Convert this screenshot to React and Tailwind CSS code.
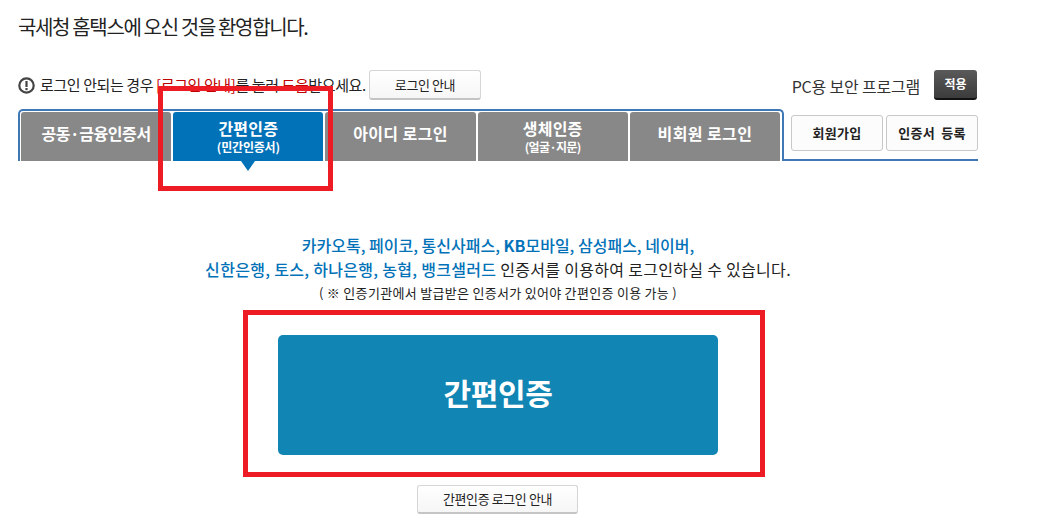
const font = { fontFamily: '"Noto Sans CJK KR", "Noto Sans", sans-serif' };

function Tab({ label, sub, active, labelClass = "tracking-[0.2px]", subClass = "tracking-[-0.2px]" }) {
  return (
    <div className={`relative flex-1 rounded-t-[3px] flex flex-col items-center justify-center text-white font-bold ${sub ? "pb-[2px]" : "pb-[8px]"} ${active ? "bg-[#0272b8]" : "bg-[#888888]"}`}>
      <span className={`text-[16px] leading-[22px] ${labelClass}`}>{label}</span>
      {sub && <span className={`text-[12px] leading-[16px] ${subClass}`}>{sub}</span>}
      {active && (
        <span className="absolute left-1/2 top-full -translate-x-1/2 w-0 h-0 border-l-[7px] border-r-[7px] border-t-[10px] border-l-transparent border-r-transparent border-t-[#0272b8]" />
      )}
    </div>
  );
}

function GrayButton({ children, className }) {
  return (
    <button className={`flex items-center justify-center bg-gradient-to-b from-white to-[#f6f6f6] border border-[#d5d5d5] border-b-2 border-b-[#c4c4c4] rounded-[3px] text-[13px] text-[#222] tracking-[-0.4px] ${className}`}>
      {children}
    </button>
  );
}

export default function App() {
  return (
    <div className="relative w-[1041px] h-[527px] overflow-hidden bg-white" style={font}>
      <div className="w-[960px] ml-[18px]">
        <h1 className="pt-[12px] h-[70px] text-[20px] leading-[30px] tracking-[-1.35px] text-[#222] font-normal">
          국세청 홈택스에 오신 것을 환영합니다.
        </h1>

        <div className="flex items-center justify-between h-[30px]">
          <div className="flex items-center">
            <svg width="17" height="17" viewBox="0 0 17 17" className="mr-[5px]">
              <circle cx="8.5" cy="8.5" r="7.2" fill="none" stroke="#444" strokeWidth="2.2" />
              <rect x="7.4" y="4" width="2.2" height="6" fill="#444" />
              <rect x="7.4" y="11" width="2.2" height="2.2" fill="#444" />
            </svg>
            <p className="text-[15px] leading-[20px] text-[#222] tracking-[-0.4px] whitespace-nowrap w-[329px]">
              로그인 안되는 경우 <span className="text-[#c00000]">[로그인 안내]</span>를 눌러 <span className="text-[#c00000]">도움</span>받으세요.
            </p>
            <GrayButton className="w-[112px] h-[30px]">로그인 안내</GrayButton>
          </div>
          <div className="flex items-center mr-[1px]">
            <span className="text-[16px] text-[#333] mr-[14px] relative top-[1px] tracking-[-0.2px]">PC용 보안 프로그램</span>
            <button className="w-[43px] h-[30px] rounded-[3px] bg-gradient-to-b from-[#5a5a5a] to-[#3c3c3c] border-b-2 border-b-[#111] text-white text-[12px] font-bold pb-[1px]">
              적용
            </button>
          </div>
        </div>

        <div className="flex h-[52px] mt-[9px]">
          <div className="w-[766px] border-2 border-b-0 border-[#3f78b5] rounded-t-[5px] pt-[1px] pl-[1px] pr-[2px] flex gap-[2px]">
            <Tab label="공동·금융인증서" labelClass="tracking-[-0.4px]" />
            <Tab label="간편인증" sub="(민간인증서)" active />
            <Tab label="아이디 로그인" labelClass="tracking-[0.4px]" />
            <Tab label="생체인증" sub="(얼굴·지문)" subClass="tracking-[-0.6px]" />
            <Tab label="비회원 로그인" labelClass="tracking-[0.4px]" />
          </div>
          <div className="flex-1 border-b-2 border-[#3f78b5] pl-[7px] pt-[6px] flex gap-[3px] items-start">
            <button className="flex-1 h-[36px] bg-[#fcfcfc] border border-[#c8c8c8] rounded-[3px] text-[13px] font-bold text-[#222] tracking-[0.3px]">회원가입</button>
            <button className="flex-1 h-[36px] bg-[#fcfcfc] border border-[#c8c8c8] rounded-[3px] text-[13px] font-bold text-[#222] tracking-[0.3px] [word-spacing:3px]">인증서 등록</button>
          </div>
        </div>

        <div className="flex flex-col items-center pt-[72px]">
          <p className="text-[16px] leading-[24px] text-[#0272b8] font-medium whitespace-nowrap">
            카카오톡, 페이코, 통신사패스, <b>KB</b>모바일, 삼성패스, 네이버,
          </p>
          <p className="text-[16px] leading-[24px] text-[#0272b8] tracking-[0.3px] font-medium whitespace-nowrap">
            신한은행, 토스, 하나은행, 농협, 뱅크샐러드 <span className="text-[#222] font-normal">인증서를 이용하여 로그인하실 수 있습니다.</span>
          </p>
          <p className="text-[13px] leading-[24px] text-[#222] tracking-[0.3px] whitespace-nowrap">
            ( ※ 인증기관에서 발급받은 인증서가 있어야 간편인증 이용 가능 )
          </p>
          <button className="mt-[30px] w-[440px] h-[120px] bg-[#1185b3] rounded-[5px] text-white text-[30px] font-bold pb-[6px] tracking-[-0.3px]">
            간편인증
          </button>
          <GrayButton className="mt-[30px] mr-[1px] w-[161px] h-[29px]">간편인증 로그인 안내</GrayButton>
        </div>
      </div>

      <div className="absolute left-[158px] top-[86px] w-[175px] h-[105px] border-[5px] border-[#ed1c24] pointer-events-none" />
      <div className="absolute left-[243px] top-[310px] w-[522px] h-[167px] border-[5px] border-[#ed1c24] pointer-events-none" />
    </div>
  );
}
